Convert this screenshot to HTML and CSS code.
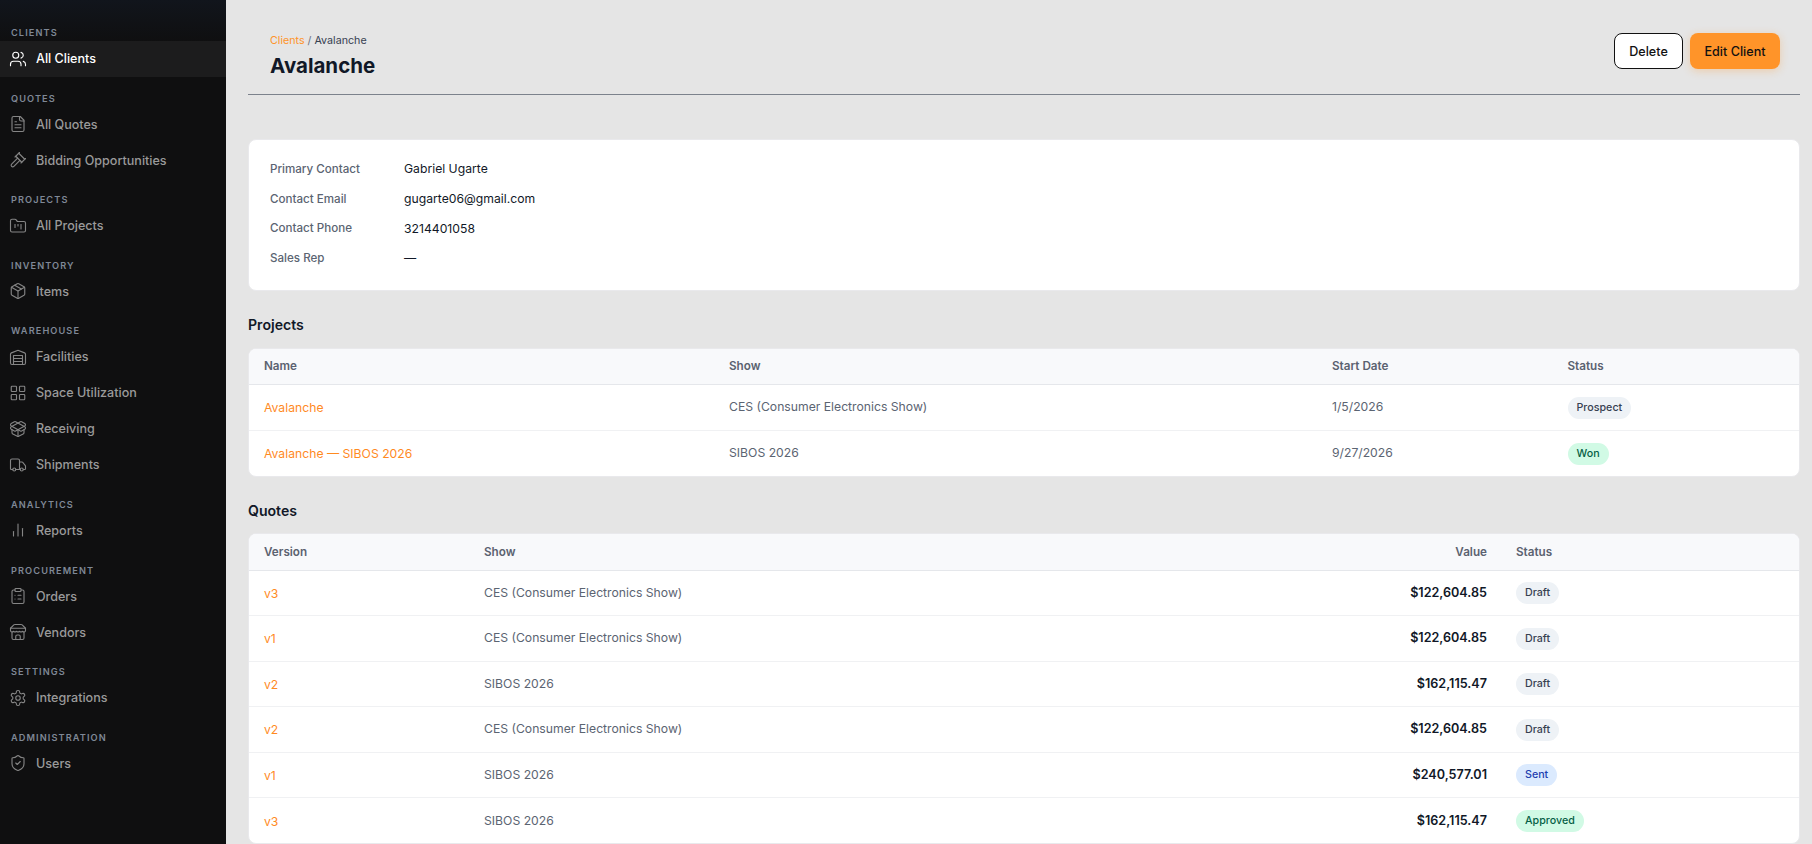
FILE: index.html
```html
<!DOCTYPE html>
<html lang="en">
<head>
<meta charset="utf-8">
<title>Avalanche</title>
<link rel="stylesheet" href="styles.css">
</head>
<body>
<div class="app">
  <aside class="sidebar">
    <div class="nav-group">
      <div class="nav-label">CLIENTS</div>
      <a class="nav-item active"><svg class="ico" viewBox="0 0 24 24"><path d="M16 21v-2a4 4 0 0 0-4-4H6a4 4 0 0 0-4 4v2"/><circle cx="9" cy="7" r="4"/><path d="M22 21v-2a4 4 0 0 0-3-3.87"/><path d="M16 3.13a4 4 0 0 1 0 7.75"/></svg>All Clients</a>
    </div>
    <div class="nav-group">
      <div class="nav-label">QUOTES</div>
      <a class="nav-item"><svg class="ico" viewBox="0 0 24 24"><path d="M15 2H6a2 2 0 0 0-2 2v16a2 2 0 0 0 2 2h12a2 2 0 0 0 2-2V7Z"/><path d="M14 2v4a2 2 0 0 0 2 2h4"/><path d="M10 9H8"/><path d="M16 13H8"/><path d="M16 17H8"/></svg>All Quotes</a>
      <a class="nav-item"><svg class="ico" viewBox="0 0 24 24"><path d="m14.5 12.5-8 8a2.119 2.119 0 1 1-3-3l8-8"/><path d="m16 16 6-6"/><path d="m8 8 6-6"/><path d="m9 7 8 8"/><path d="m21 11-8-8"/></svg>Bidding Opportunities</a>
    </div>
    <div class="nav-group">
      <div class="nav-label">PROJECTS</div>
      <a class="nav-item"><svg class="ico" viewBox="0 0 24 24"><path d="M4 20h16a2 2 0 0 0 2-2V8a2 2 0 0 0-2-2h-7.93a2 2 0 0 1-1.66-.9l-.82-1.2A2 2 0 0 0 7.93 3H4a2 2 0 0 0-2 2v13c0 1.1.9 2 2 2Z"/><path d="M8 10v4"/><path d="M12 10v2"/><path d="M16 10v6"/></svg>All Projects</a>
    </div>
    <div class="nav-group">
      <div class="nav-label">INVENTORY</div>
      <a class="nav-item"><svg class="ico" viewBox="0 0 24 24"><path d="m7.5 4.27 9 5.15"/><path d="M21 8a2 2 0 0 0-1-1.73l-7-4a2 2 0 0 0-2 0l-7 4A2 2 0 0 0 3 8v8a2 2 0 0 0 1 1.73l7 4a2 2 0 0 0 2 0l7-4A2 2 0 0 0 21 16Z"/><path d="m3.3 7 8.7 5 8.7-5"/><path d="M12 22V12"/></svg>Items</a>
    </div>
    <div class="nav-group">
      <div class="nav-label">WAREHOUSE</div>
      <a class="nav-item"><svg class="ico" viewBox="0 0 24 24"><path d="M22 8.35V20a2 2 0 0 1-2 2H4a2 2 0 0 1-2-2V8.35A2 2 0 0 1 3.26 6.5l8-3.2a2 2 0 0 1 1.48 0l8 3.2A2 2 0 0 1 22 8.35Z"/><path d="M6 18h12"/><path d="M6 14h12"/><rect width="12" height="12" x="6" y="10"/></svg>Facilities</a>
      <a class="nav-item"><svg class="ico" viewBox="0 0 24 24"><rect width="7" height="7" x="3" y="3" rx="1"/><rect width="7" height="7" x="14" y="3" rx="1"/><rect width="7" height="7" x="14" y="14" rx="1"/><rect width="7" height="7" x="3" y="14" rx="1"/></svg>Space Utilization</a>
      <a class="nav-item"><svg class="ico" viewBox="0 0 24 24"><path d="M12 22v-9"/><path d="M15.17 2.21a1.67 1.67 0 0 1 1.63 0L21 4.57a1.93 1.93 0 0 1 0 3.36L8.82 14.79a1.655 1.655 0 0 1-1.64 0L3 12.43a1.93 1.93 0 0 1 0-3.36z"/><path d="M20 13v3.87a2.06 2.06 0 0 1-1.11 1.83l-6 3.08a1.93 1.93 0 0 1-1.78 0l-6-3.08A2.06 2.06 0 0 1 4 16.87V13"/><path d="M21 12.43a1.93 1.93 0 0 0 0-3.36L8.83 2.2a1.64 1.64 0 0 0-1.63 0L3 4.57a1.93 1.93 0 0 0 0 3.36l12.18 6.86a1.636 1.636 0 0 0 1.63 0z"/></svg>Receiving</a>
      <a class="nav-item"><svg class="ico" viewBox="0 0 24 24"><path d="M14 18V6a2 2 0 0 0-2-2H4a2 2 0 0 0-2 2v11a1 1 0 0 0 1 1h2"/><path d="M15 18H9"/><path d="M19 18h2a1 1 0 0 0 1-1v-3.65a1 1 0 0 0-.22-.624l-3.48-4.35A1 1 0 0 0 17.52 8H14"/><circle cx="17" cy="18" r="2"/><circle cx="7" cy="18" r="2"/></svg>Shipments</a>
    </div>
    <div class="nav-group">
      <div class="nav-label">ANALYTICS</div>
      <a class="nav-item"><svg class="ico" viewBox="0 0 24 24"><path d="M18 20V10"/><path d="M12 20V4"/><path d="M6 20v-6"/></svg>Reports</a>
    </div>
    <div class="nav-group">
      <div class="nav-label">PROCUREMENT</div>
      <a class="nav-item"><svg class="ico" viewBox="0 0 24 24"><rect width="8" height="4" x="8" y="2" rx="1" ry="1"/><path d="M16 4h2a2 2 0 0 1 2 2v14a2 2 0 0 1-2 2H6a2 2 0 0 1-2-2V6a2 2 0 0 1 2-2h2"/><path d="M12 11h4"/><path d="M12 16h4"/><path d="M8 11h.01"/><path d="M8 16h.01"/></svg>Orders</a>
      <a class="nav-item"><svg class="ico" viewBox="0 0 24 24"><path d="m2 7 4.41-4.41A2 2 0 0 1 7.83 2h8.34a2 2 0 0 1 1.42.59L22 7"/><path d="M4 12v8a2 2 0 0 0 2 2h12a2 2 0 0 0 2-2v-8"/><path d="M15 22v-4a2 2 0 0 0-2-2h-2a2 2 0 0 0-2 2v4"/><path d="M2 7h20"/><path d="M22 7v3a2 2 0 0 1-2 2a2.7 2.7 0 0 1-1.59-.63.7.7 0 0 0-.82 0A2.7 2.7 0 0 1 16 12a2.7 2.7 0 0 1-1.59-.63.7.7 0 0 0-.82 0A2.7 2.7 0 0 1 12 12a2.7 2.7 0 0 1-1.59-.63.7.7 0 0 0-.82 0A2.7 2.7 0 0 1 8 12a2.7 2.7 0 0 1-1.59-.63.7.7 0 0 0-.82 0A2.7 2.7 0 0 1 4 12a2 2 0 0 1-2-2V7"/></svg>Vendors</a>
    </div>
    <div class="nav-group">
      <div class="nav-label">SETTINGS</div>
      <a class="nav-item"><svg class="ico" viewBox="0 0 24 24"><path d="M12.22 2h-.44a2 2 0 0 0-2 2v.18a2 2 0 0 1-1 1.73l-.43.25a2 2 0 0 1-2 0l-.15-.08a2 2 0 0 0-2.73.73l-.22.38a2 2 0 0 0 .73 2.73l.15.1a2 2 0 0 1 1 1.72v.51a2 2 0 0 1-1 1.74l-.15.09a2 2 0 0 0-.73 2.73l.22.38a2 2 0 0 0 2.73.73l.15-.08a2 2 0 0 1 2 0l.43.25a2 2 0 0 1 1 1.73V20a2 2 0 0 0 2 2h.44a2 2 0 0 0 2-2v-.18a2 2 0 0 1 1-1.73l.43-.25a2 2 0 0 1 2 0l.15.08a2 2 0 0 0 2.73-.73l.22-.39a2 2 0 0 0-.73-2.73l-.15-.08a2 2 0 0 1-1-1.74v-.5a2 2 0 0 1 1-1.74l.15-.09a2 2 0 0 0 .73-2.73l-.22-.38a2 2 0 0 0-2.73-.73l-.15.08a2 2 0 0 1-2 0l-.43-.25a2 2 0 0 1-1-1.73V4a2 2 0 0 0-2-2z"/><circle cx="12" cy="12" r="3"/></svg>Integrations</a>
    </div>
    <div class="nav-group">
      <div class="nav-label">ADMINISTRATION</div>
      <a class="nav-item"><svg class="ico" viewBox="0 0 24 24"><path d="M20 13c0 5-3.5 7.5-7.66 8.95a1 1 0 0 1-.67-.01C7.5 20.5 4 18 4 13V6a1 1 0 0 1 1-1c2 0 4.5-1.2 6.24-2.72a1.17 1.17 0 0 1 1.52 0C14.51 3.81 17 5 19 5a1 1 0 0 1 1 1z"/><path d="m9 12 2 2 4-4"/></svg>Users</a>
    </div>
  </aside>
  <main class="main">
    <header class="page-head">
      <div class="head-text">
        <div class="crumbs"><a class="crumb-link">Clients</a> <span class="crumb-sep">/</span> Avalanche</div>
        <h1 class="title">Avalanche</h1>
      </div>
      <div class="actions">
        <button class="btn btn-outline">Delete</button>
        <button class="btn btn-primary">Edit Client</button>
      </div>
    </header>

    <section class="card details">
      <div class="detail-row"><span class="detail-key">Primary Contact</span><span class="detail-val">Gabriel Ugarte</span></div>
      <div class="detail-row"><span class="detail-key">Contact Email</span><span class="detail-val">gugarte06@gmail.com</span></div>
      <div class="detail-row"><span class="detail-key">Contact Phone</span><span class="detail-val">3214401058</span></div>
      <div class="detail-row"><span class="detail-key">Sales Rep</span><span class="detail-val">—</span></div>
    </section>

    <h2 class="section-title">Projects</h2>
    <div class="card table-card">
      <table class="table">
        <colgroup><col class="c-p1"><col class="c-p2"><col class="c-p3"><col></colgroup>
        <thead><tr><th>Name</th><th>Show</th><th>Start Date</th><th>Status</th></tr></thead>
        <tbody>
          <tr><td><a class="link">Avalanche</a></td><td>CES (Consumer Electronics Show)</td><td>1/5/2026</td><td><span class="badge b-gray">Prospect</span></td></tr>
          <tr><td><a class="link">Avalanche — SIBOS 2026</a></td><td>SIBOS 2026</td><td>9/27/2026</td><td><span class="badge b-green">Won</span></td></tr>
        </tbody>
      </table>
    </div>

    <h2 class="section-title">Quotes</h2>
    <div class="card table-card">
      <table class="table">
        <colgroup><col class="c-q1"><col class="c-q2"><col class="c-q3"><col></colgroup>
        <thead><tr><th>Version</th><th>Show</th><th class="num">Value</th><th>Status</th></tr></thead>
        <tbody>
          <tr><td><a class="link">v3</a></td><td>CES (Consumer Electronics Show)</td><td class="num val">$122,604.85</td><td><span class="badge b-gray">Draft</span></td></tr>
          <tr><td><a class="link">v1</a></td><td>CES (Consumer Electronics Show)</td><td class="num val">$122,604.85</td><td><span class="badge b-gray">Draft</span></td></tr>
          <tr><td><a class="link">v2</a></td><td>SIBOS 2026</td><td class="num val">$162,115.47</td><td><span class="badge b-gray">Draft</span></td></tr>
          <tr><td><a class="link">v2</a></td><td>CES (Consumer Electronics Show)</td><td class="num val">$122,604.85</td><td><span class="badge b-gray">Draft</span></td></tr>
          <tr><td><a class="link">v1</a></td><td>SIBOS 2026</td><td class="num val">$240,577.01</td><td><span class="badge b-blue">Sent</span></td></tr>
          <tr><td><a class="link">v3</a></td><td>SIBOS 2026</td><td class="num val">$162,115.47</td><td><span class="badge b-green">Approved</span></td></tr>
        </tbody>
      </table>
    </div>
  </main>
</div>
</body>
</html>
```

FILE: styles.css
```css
* { box-sizing: border-box; }
html, body { margin: 0; height: 100%; overflow: hidden; }
body { font-family: Inter, "Liberation Sans", sans-serif; background: #e5e5e5; color: #111827; -webkit-font-smoothing: antialiased; }
.app { display: flex; height: 844px; }
.sidebar { width: 226px; flex: none; background: linear-gradient(180deg, #11151c 0, #0f0f10 42px); padding-top: 25px; }
.nav-group { margin-bottom: 13.6px; }
.nav-label { height: 16px; line-height: 16px; padding-left: 11px; font-size: 9.2px; font-weight: 600; letter-spacing: 1.1px; color: #7f8896; }
.nav-item { display: flex; align-items: center; gap: 9px; height: 36px; padding-left: 9px; font-size: 12.55px; font-weight: 500; color: #9a9a9a; padding-bottom: 1px; }
.nav-item.active { background: #1c1c1d; color: #fff; }
.ico { width: 18px; height: 18px; flex: none; fill: none; stroke: #858585; stroke-width: 1.5; stroke-linecap: round; stroke-linejoin: round; }
.active .ico { stroke: #fff; }
.main { flex: 1; min-width: 0; padding: 0 12px 0 22px; }
.page-head { display: flex; justify-content: space-between; height: 95px; padding: 33px 20px 0 22px; border-bottom: 1px solid #7c828c; margin-bottom: 44px; }
.crumbs { font-size: 10.7px; line-height: 15px; color: #374151; }
.crumb-link { color: #ff9429; }
.crumb-sep { color: #6b7280; }
.title { margin: 3px 0 0; font-size: 20.5px; line-height: 30px; font-weight: 700; color: #111827; }
.actions { display: flex; gap: 7px; }
.btn { height: 36px; border-radius: 8px; font: 500 12.6px Inter, "Liberation Sans", sans-serif; color: #111; cursor: pointer; }
.btn-outline { width: 69px; background: #fff; border: 1px solid #111; }
.btn-primary { width: 90px; background: #ff9429; border: 0; box-shadow: 0 2px 8px rgba(255, 148, 41, .3); }
.card { background: #fff; border-radius: 8px; border: 1px solid #e9e9ec; }
.details { padding: 14px 21px 0; height: 152px; }
.detail-row { display: flex; align-items: center; height: 29.7px; font-size: 12.2px; }
.detail-key { width: 134px; color: #5b6472; font-size: 11.6px; font-weight: 500; }
.detail-val { color: #111827; }
.section-title { margin: 23px 0 11.5px; font-size: 14.1px; line-height: 22px; font-weight: 600; color: #111827; }
.table-card { overflow: hidden; }
.table { width: 100%; border-collapse: collapse; table-layout: fixed; font-size: 12.2px; }
.c-p1 { width: 465px; }
.c-p2 { width: 603px; }
.c-p3 { width: 235.5px; }
.c-q1 { width: 220px; }
.c-q2 { width: 813px; }
.c-q3 { width: 219px; }
th { height: 36px; padding: 0 15px; text-align: left; font-size: 11.7px; font-weight: 600; color: #5b6270; background: #f8f9fb; border-bottom: 1px solid #e5e7eb; }
td { height: 45.5px; padding: 0 15px 1px; color: #5b6472; border-bottom: 1px solid #f0f1f3; vertical-align: middle; }
tbody tr:last-child td { border-bottom: 0; }
th.num, td.num { text-align: right; padding-right: 14px; }
td.val { color: #111827; font-weight: 600; font-size: 12.6px; }
.link { color: #ff8a1f; position: relative; top: 1px; }
.badge { display: inline-block; height: 22px; line-height: 22px; padding: 0 9px; border-radius: 11px; font-size: 10.7px; font-weight: 500; position: relative; top: 1px; }
.b-gray { background: #eef2f6; color: #374151; }
.b-green { background: #d1fae5; color: #065f46; }
.b-blue { background: #dbeafe; color: #1e40af; }
```
